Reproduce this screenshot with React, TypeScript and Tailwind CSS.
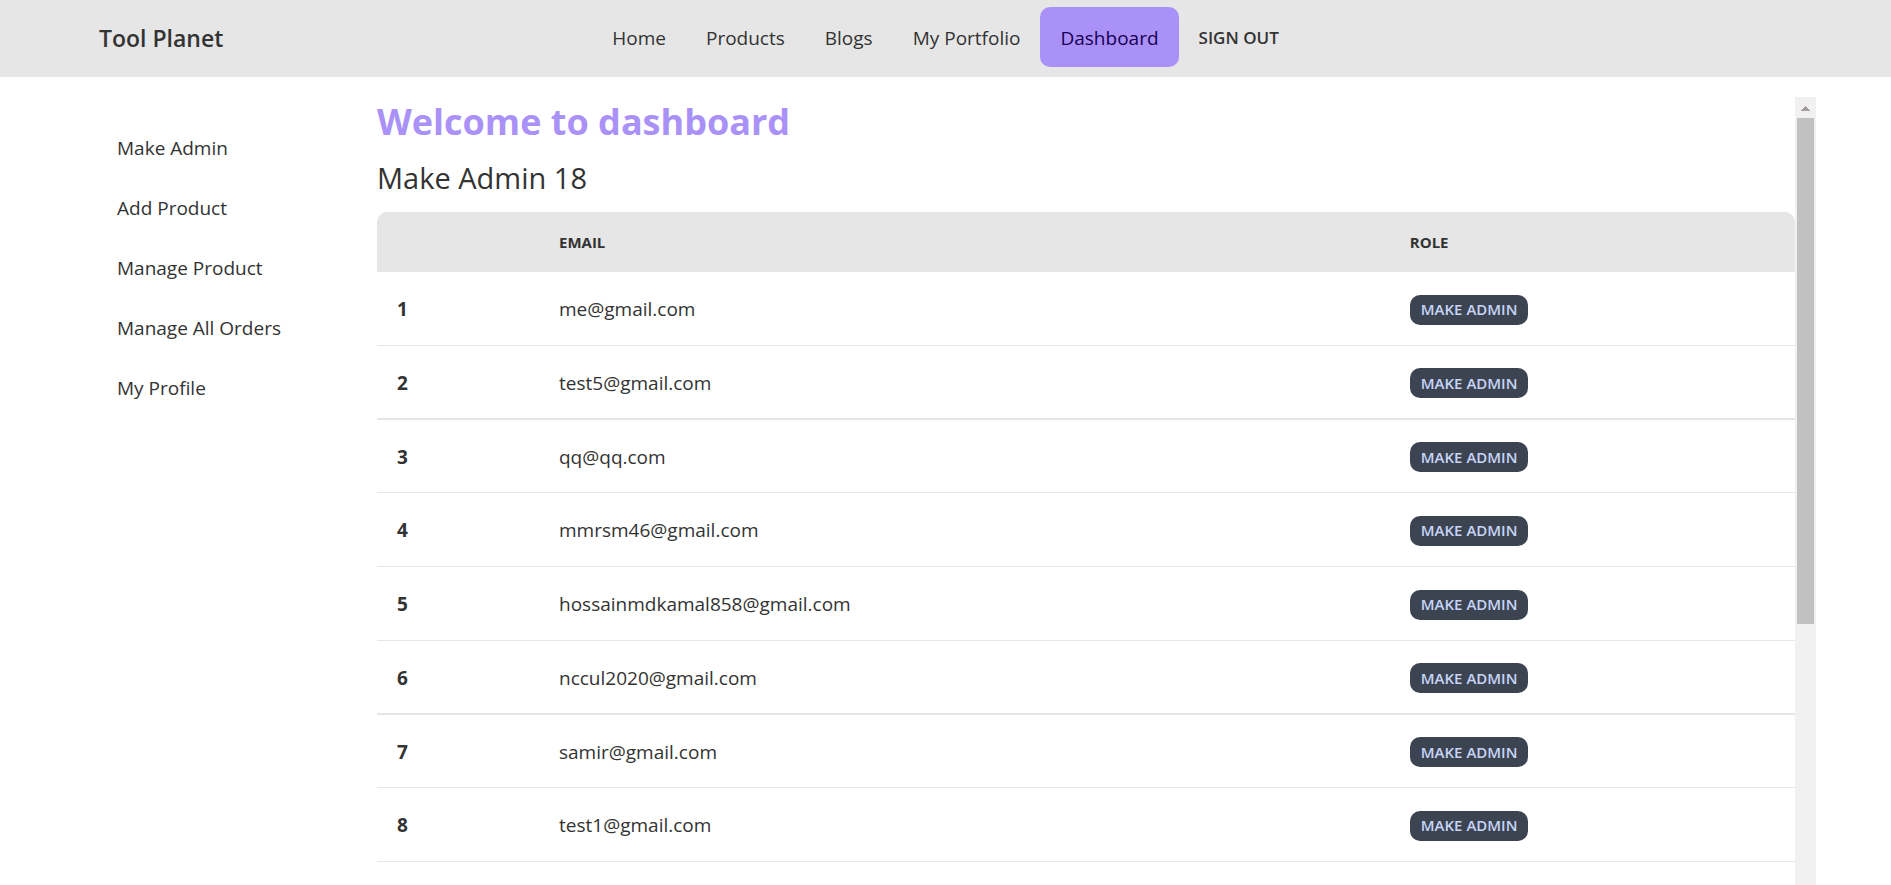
const navLinks = ["Home", "Products", "Blogs", "My Portfolio", "Dashboard"];

const menuLinks = [
  "Make Admin",
  "Add Product",
  "Manage Product",
  "Manage All Orders",
  "My Profile",
];

const emails = [
  "me@gmail.com",
  "test5@gmail.com",
  "qq@qq.com",
  "mmrsm46@gmail.com",
  "hossainmdkamal858@gmail.com",
  "nccul2020@gmail.com",
  "samir@gmail.com",
  "test1@gmail.com",
];

function Header() {
  return (
    <header className="grid h-[77px] shrink-0 grid-cols-[1fr_auto_1fr] items-center bg-[#e6e6e6]">
      <a href="#" className="justify-self-start pl-[99px] text-[23px] font-semibold">
        Tool Planet
      </a>
      <nav className="flex items-center pb-[3px]">
        {navLinks.map((label) => (
          <a
            key={label}
            href="#"
            className={
              label === "Dashboard"
                ? "flex h-[60px] items-center rounded-[10px] bg-[#a991f7] px-5 pt-[2px] text-[#180052]"
                : "flex h-[60px] items-center px-5 pt-[2px]"
            }
          >
            {label}
          </a>
        ))}
        <button type="button" className="h-[60px] px-5 pt-[2px] text-[17px] font-semibold">
          SIGN OUT
        </button>
      </nav>
    </header>
  );
}

function Sidebar() {
  return (
    <aside className="w-[280px] shrink-0 pt-[21px]">
      <ul>
        {menuLinks.map((label) => (
          <li key={label}>
            <a href="#" className="flex h-[60px] items-center px-5">
              {label}
            </a>
          </li>
        ))}
      </ul>
    </aside>
  );
}

function UserTable() {
  return (
    <table className="w-full table-fixed border-separate border-spacing-0 text-left">
      <thead>
        <tr className="h-[60px] text-[15px]">
          <td className="w-[162px] rounded-tl-[10px] bg-[#e6e6e6]" />
          <th scope="col" className="w-[60%] bg-[#e6e6e6] px-5 font-bold">
            EMAIL
          </th>
          <th scope="col" className="rounded-tr-[10px] bg-[#e6e6e6] px-5 font-bold">
            ROLE
          </th>
        </tr>
      </thead>
      <tbody>
        {emails.map((email, i) => (
          <tr
            key={email}
            className="h-[74px] *:border-b *:border-[#e6e6e6] *:pt-[2px] nth-[4n+2]:*:border-b-2 nth-[4n+3]:h-[73px]"
          >
            <th scope="row" className="px-5 font-bold">
              {i + 1}
            </th>
            <td className="px-5">{email}</td>
            <td className="px-5">
              <button
                type="button"
                className="flex h-[30px] items-center rounded-[10px] bg-[#3d4451] px-[11px] text-[15px] font-semibold whitespace-nowrap text-[#c6d5f7]"
              >
                MAKE ADMIN
              </button>
            </td>
          </tr>
        ))}
      </tbody>
    </table>
  );
}

function ScrollRail() {
  return (
    <div className="flex w-[21px] shrink-0 flex-col bg-[#f1f1f1]" aria-hidden="true">
      <div className="flex h-[21px] shrink-0 items-center justify-center pt-[2px]">
        <svg width="9" height="5" viewBox="0 0 9 5" fill="#a39d9d" shapeRendering="crispEdges">
          <path d="M4 0h1v1h1v1h1v1h1v1h1v1H0V4h1V3h1V2h1V1h1z" />
        </svg>
      </div>
      <div className="mx-[2px] flex-66 bg-[#c1c1c1]" />
      <div className="flex-34" />
    </div>
  );
}

export default function App() {
  return (
    <div className="flex h-screen flex-col overflow-hidden bg-white font-['Open_Sans',sans-serif] text-[19px] text-[#333333]">
      <Header />
      <div className="mt-5 flex min-h-0 flex-1 pr-[75px] pl-[97px]">
        <Sidebar />
        <main className="min-w-0 flex-1 overflow-hidden">
          <h1 className="text-[36px] leading-[50px] font-bold text-[#a991f7]">
            Welcome to dashboard
          </h1>
          <h2 className="mt-2 mb-3 text-[29px] leading-[45px]">Make Admin 18</h2>
          <UserTable />
        </main>
        <ScrollRail />
      </div>
    </div>
  );
}
